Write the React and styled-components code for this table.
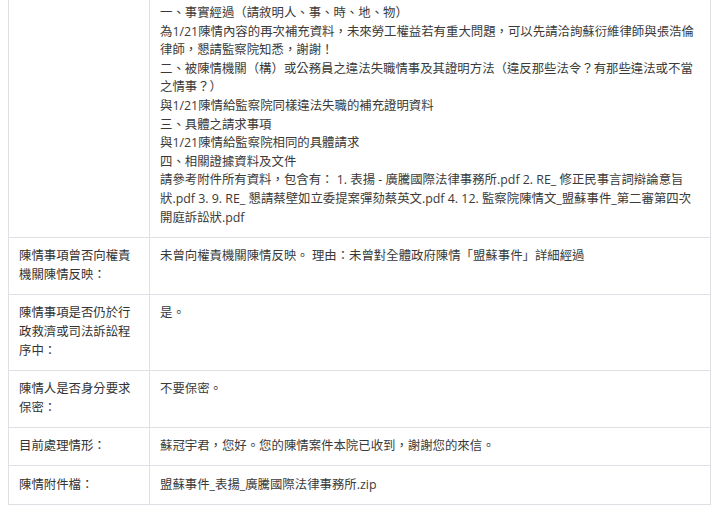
import React from "react";
import styled, { createGlobalStyle } from "styled-components";

const GlobalStyle = createGlobalStyle`
  html, body { margin: 0; padding: 0; background: #ffffff; }
  body {
    font-family: "Open Sans", "Noto Sans CJK TC", sans-serif;
    color: #333333;
    overflow: hidden;
  }
`;

const Page = styled.div`
  padding: 0 9px 0 8px;
`;

const Table = styled.table`
  width: 703px;
  margin-top: -6.5px;
  border-collapse: collapse;
  table-layout: fixed;
  font-size: 12.4px;
  line-height: 18.6px;
`;

const Row = styled.tr``;

const Label = styled.th`
  width: 120px;
  padding: 9.5px 10px;
  border: 1px solid #dde1e6;
  text-align: left;
  vertical-align: top;
  font-weight: 400;
  color: #333333;
`;

const Value = styled.td`
  padding: 9.5px 10px;
  border: 1px solid #dde1e6;
  vertical-align: top;
  color: #3a3a3a;
  word-break: break-word;
`;

const Line = styled.div``;

const rows = [
  {
    label: "",
    lines: [
      "一、事實經過（請敘明人、事、時、地、物）",
      "為1/21陳情內容的再次補充資料，未來勞工權益若有重大問題，可以先請洽詢蘇衍維律師與張浩倫律師，懇請監察院知悉，謝謝！",
      "二、被陳情機關（構）或公務員之違法失職情事及其證明方法（違反那些法令？有那些違法或不當之情事？）",
      "與1/21陳情給監察院同樣違法失職的補充證明資料",
      "三、具體之請求事項",
      "與1/21陳情給監察院相同的具體請求",
      "四、相關證據資料及文件",
      "請參考附件所有資料，包含有： 1. 表揚 - 廣騰國際法律事務所.pdf 2. RE_ 修正民事言詞辯論意旨狀.pdf 3. 9. RE_ 懇請蔡壁如立委提案彈劾蔡英文.pdf 4. 12. 監察院陳情文_盟蘇事件_第二審第四次開庭訴訟狀.pdf",
    ],
  },
  {
    label: "陳情事項曾否向權責機關陳情反映：",
    lines: ["未曾向權責機關陳情反映。 理由：未曾對全體政府陳情「盟蘇事件」詳細經過"],
  },
  {
    label: "陳情事項是否仍於行政救濟或司法訴訟程序中：",
    lines: ["是。"],
  },
  {
    label: "陳情人是否身分要求保密：",
    lines: ["不要保密。"],
  },
  {
    label: "目前處理情形：",
    lines: ["蘇冠宇君，您好。您的陳情案件本院已收到，謝謝您的來信。"],
  },
  {
    label: "陳情附件檔：",
    lines: ["盟蘇事件_表揚_廣騰國際法律事務所.zip"],
  },
];

export default function App() {
  return (
    <>
      <GlobalStyle />
      <Page>
        <Table>
          <colgroup>
            <col style={{ width: "141px" }} />
            <col />
          </colgroup>
          <tbody>
            {rows.map((r, i) => (
              <Row key={i}>
                <Label>{r.label}</Label>
                <Value>
                  {r.lines.map((l, j) => (
                    <Line key={j}>{l}</Line>
                  ))}
                </Value>
              </Row>
            ))}
          </tbody>
        </Table>
      </Page>
    </>
  );
}
